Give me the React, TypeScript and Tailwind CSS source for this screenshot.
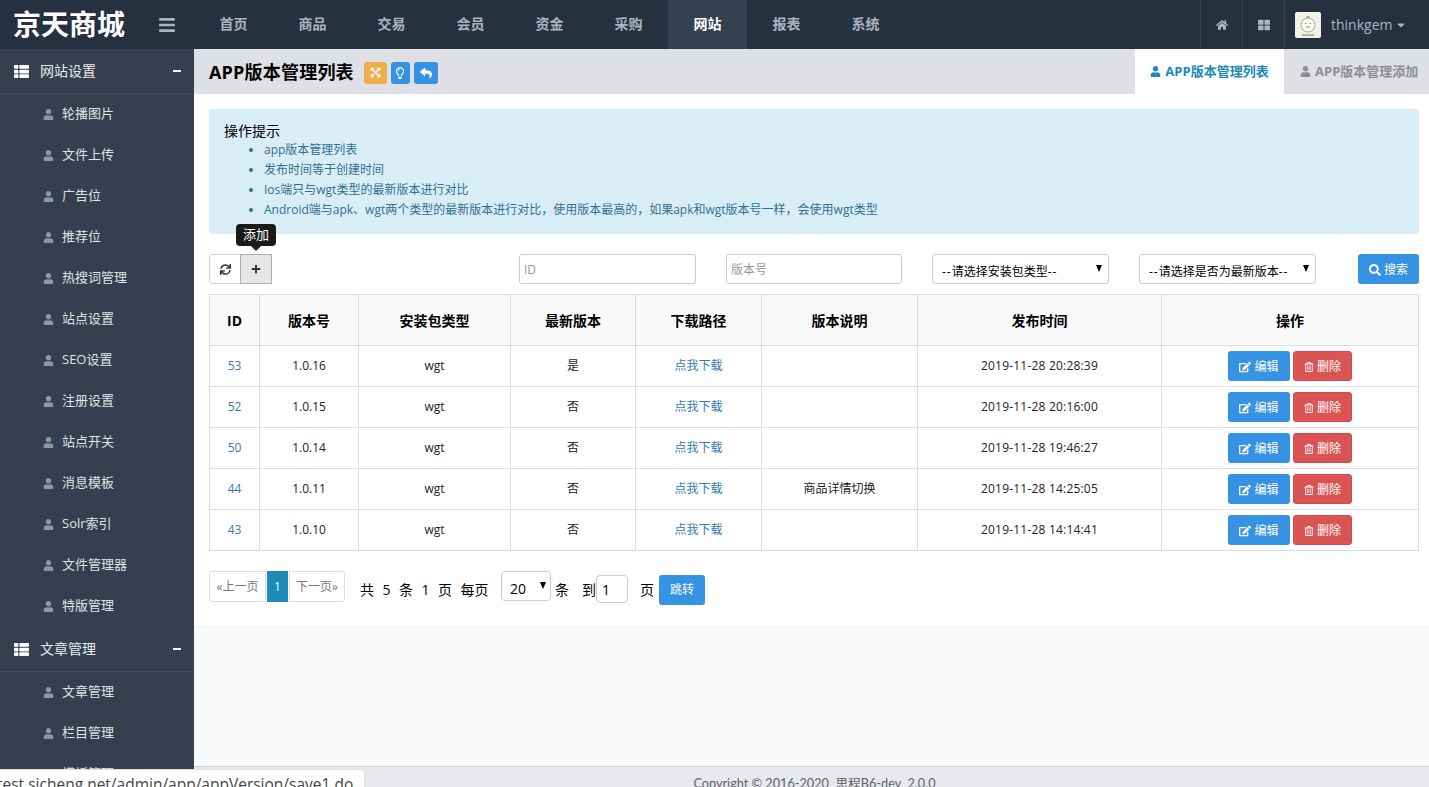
import { FaBars, FaCaretDown, FaEdit, FaExpandArrowsAlt, FaHome, FaPlus, FaRegLightbulb, FaRegTrashAlt, FaReply, FaSearch, FaSync, FaThLarge, FaThList, FaUser } from "react-icons/fa";

const font = "[font-family:'Open_Sans','Noto_Sans_CJK_SC',sans-serif]";

const navItems = ["首页", "商品", "交易", "会员", "资金", "采购", "网站", "报表", "系统"];
const siteMenu = ["轮播图片", "文件上传", "广告位", "推荐位", "热搜词管理", "站点设置", "SEO设置", "注册设置", "站点开关", "消息模板", "Solr索引", "文件管理器", "特版管理"];
const articleMenu = ["文章管理", "栏目管理", "模板管理"];
const tips = [
  "app版本管理列表",
  "发布时间等于创建时间",
  "Ios端只与wgt类型的最新版本进行对比",
  "Android端与apk、wgt两个类型的最新版本进行对比，使用版本最高的，如果apk和wgt版本号一样，会使用wgt类型",
];
const rows = [
  { id: 53, version: "1.0.16", latest: "是", note: "", time: "2019-11-28 20:28:39" },
  { id: 52, version: "1.0.15", latest: "否", note: "", time: "2019-11-28 20:16:00" },
  { id: 50, version: "1.0.14", latest: "否", note: "", time: "2019-11-28 19:46:27" },
  { id: 44, version: "1.0.11", latest: "否", note: "商品详情切换", time: "2019-11-28 14:25:05" },
  { id: 43, version: "1.0.10", latest: "否", note: "", time: "2019-11-28 14:14:41" },
];

function MenuGroup({ title, items }: { title: string; items: string[] }) {
  return (
    <div>
      <div className="flex h-[45px] items-center border-b border-[#3f4b5c] pl-[13px] pr-[13px] text-[14px] text-[#e8eaed]">
        <FaThList className="h-[15px] w-[17px] text-white" />
        <span className="mb-[2px] ml-[10px] flex-1">{title}</span>
        <span className="h-[2px] w-[8px] bg-white" />
      </div>
      {items.map((item) => (
        <div key={item} className="flex h-[41px] items-center pl-[43px] text-[13px] text-[#dfe2e6]">
          <FaUser className="h-[11px] w-[11px] text-[#8f97a3]" />
          <span className="mb-[1px] ml-[8px]">{item}</span>
        </div>
      ))}
    </div>
  );
}

function Avatar() {
  return (
    <svg viewBox="0 0 26 26" className="h-[26px] w-[26px] rounded-[2px] bg-[#f1f2ea]">
      <path d="M13 4v3M11 4.5l2 1 2-1" fill="none" stroke="#8aa56a" strokeWidth="1" />
      <circle cx="13" cy="13" r="7" fill="#fbfbf6" stroke="#8f9481" strokeWidth="0.8" />
      <path d="M10 11.5h1.5M14.5 11.5H16M11 15h4" stroke="#6c6f60" strokeWidth="0.8" />
      <path d="M7 23h12" stroke="#7d7a55" strokeWidth="1.2" />
    </svg>
  );
}

function Arrow() {
  return <span className="block h-0 w-0 border-x-[3.5px] border-t-[7px] border-x-transparent border-t-black" />;
}

function FakeSelect({ label }: { label: string }) {
  return (
    <div className="ml-[30px] flex h-[30px] w-[177px] items-start justify-between rounded-[3px] border border-[#ccc] pl-[9px] pr-[6px] text-black">
      <span className="pt-[8px]">
        <span className="tracking-[1px]">--</span>{label}<span className="tracking-[1px]">--</span>
      </span>
      <span className="pt-[10px]"><Arrow /></span>
    </div>
  );
}

export default function App() {
  return (
    <div className={`relative flex h-[787px] w-[1429px] flex-col overflow-hidden bg-[#f8f9fb] ${font}`}>
      <header className="flex h-[49px] shrink-0 items-center bg-[#263140]">
        <div className="flex w-[194px] items-center">
          <span className="mb-[2px] ml-[13px] text-[28px] font-bold leading-none text-white">京天商城</span>
          <FaBars className="ml-[33px] h-[18px] w-[18px] text-[#aab5c2]" />
        </div>
        <nav className="flex h-full flex-1">
          {navItems.map((item) => (
            <div
              key={item}
              className={`flex h-full w-[79px] items-center justify-center pb-[2px] text-[14px] font-bold ${item === "网站" ? "bg-[#354050] text-white" : "text-[#aab4c0]"}`}
            >
              {item}
            </div>
          ))}
        </nav>
        <div className="flex h-full text-[#aab5c2]">
          <div className="flex w-[42px] items-center justify-center border-l border-[#364150]">
            <FaHome className="h-[12px] w-[12px]" />
          </div>
          <div className="flex w-[42px] items-center justify-center border-l border-[#364150]">
            <FaThLarge className="h-[12px] w-[12px]" />
          </div>
          <div className="flex w-[145px] items-center border-l border-[#364150] pl-[10px]">
            <Avatar />
            <span className="ml-[10px] text-[14px]">thinkgem</span>
            <FaCaretDown className="ml-[4px] h-[12px] w-[10px]" />
          </div>
        </div>
      </header>

      <div className="flex min-h-0 flex-1">
        <aside className="w-[194px] shrink-0 overflow-hidden bg-[#353f4f]">
          <MenuGroup title="网站设置" items={siteMenu} />
          <MenuGroup title="文章管理" items={articleMenu} />
        </aside>

        <main className="flex min-w-0 flex-1 flex-col">
          <div className="flex h-[45px] shrink-0 items-center bg-[#dfe0e5]">
            <h1 className="ml-[15px] mt-[2px] text-[18px] font-bold tracking-[0.2px] text-black">APP版本管理列表</h1>
            <div className="ml-[10px] mt-[2px] flex items-center gap-[4px] text-white">
              <span className="flex h-[22px] w-[23px] items-center justify-center rounded-[3px] bg-[#f0ad4e]"><FaExpandArrowsAlt className="h-[11px] w-[11px]" /></span>
              <span className="flex h-[22px] w-[19px] items-center justify-center rounded-[3px] bg-[#3692e3]"><FaRegLightbulb className="h-[12px] w-[12px]" /></span>
              <span className="flex h-[22px] w-[24px] items-center justify-center rounded-[3px] bg-[#3692e3]"><FaReply className="h-[12px] w-[12px]" /></span>
            </div>
            <div className="ml-auto flex h-full text-[13px] font-bold">
              <div className="flex w-[149px] items-center justify-center bg-white text-[#1c8abb]">
                <FaUser className="mr-[4px] h-[11px] w-[11px]" />APP版本管理列表
              </div>
              <div className="flex w-[145px] items-center pl-[16px] text-[#8e8e90]">
                <FaUser className="mr-[4px] h-[11px] w-[11px] shrink-0" /><span className="whitespace-nowrap">APP版本管理添加</span>
              </div>
            </div>
          </div>

          <section className="relative h-[533px] shrink-0 border-b border-[#eff0f2] bg-white pl-[15px] pr-[10px] pt-[15px]">
            <div className="h-[125px] rounded-[4px] bg-[#d9edf6] px-[15px] pt-[13px]">
              <div className="text-[14px] leading-[18px] text-black">操作提示</div>
              <ul className="ml-[40px] list-disc text-[12px] leading-[20px] text-[#31708f]">
                {tips.map((tip) => (
                  <li key={tip}>{tip}</li>
                ))}
              </ul>
            </div>

            <div className="mt-[20px] flex h-[30px] items-center text-[12px]">
              <div className="flex">
                <button className="flex h-[30px] w-[32px] items-center justify-center rounded-l-[3px] border border-[#d2d2d2] bg-white text-[#333]"><FaSync className="h-[11px] w-[11px]" /></button>
                <button className="-ml-px flex h-[30px] w-[32px] items-center justify-center border border-[#adadad] bg-[#e6e6e6] text-[#333]"><FaPlus className="h-[10px] w-[10px]" /></button>
              </div>
              <input placeholder="ID" className="ml-[247px] h-[30px] w-[177px] rounded-[3px] border border-[#ccc] px-[4px] placeholder:text-[#999]" />
              <input placeholder="版本号" className="ml-[30px] h-[30px] w-[176px] rounded-[3px] border border-[#ccc] px-[4px] placeholder:text-[#999]" />
              <FakeSelect label="请选择安装包类型" />
              <FakeSelect label="请选择是否为最新版本" />
              <button className="ml-[42px] flex h-[30px] w-[61px] items-center justify-center rounded-[3px] bg-[#3692e3] pt-[1px] text-white">
                <FaSearch className="mr-[3px] h-[12px] w-[12px]" />搜索
              </button>
            </div>

            <table className="mt-[10px] w-[1209px] table-fixed border-collapse text-center text-[12px] text-[#222]">
              <colgroup>
                <col className="w-[50px]" />
                <col className="w-[99px]" />
                <col className="w-[152px]" />
                <col className="w-[125px]" />
                <col className="w-[126px]" />
                <col className="w-[156px]" />
                <col className="w-[244px]" />
                <col className="w-[257px]" />
              </colgroup>
              <thead>
                <tr className="h-[51px] bg-[#f9f9f9] text-[14px] font-bold text-black">
                  {["ID", "版本号", "安装包类型", "最新版本", "下载路径", "版本说明", "发布时间", "操作"].map((title) => (
                    <th key={title} className="border border-[#ddd]">{title}</th>
                  ))}
                </tr>
              </thead>
              <tbody>
                {rows.map((row) => (
                  <tr key={row.id} className="h-[41px]">
                    <td className="border border-[#ddd] text-[#337ab7]">{row.id}</td>
                    <td className="border border-[#ddd]">{row.version}</td>
                    <td className="border border-[#ddd]">wgt</td>
                    <td className="border border-[#ddd]">{row.latest}</td>
                    <td className="border border-[#ddd] text-[#337ab7]">点我下载</td>
                    <td className="border border-[#ddd]">{row.note}</td>
                    <td className="border border-[#ddd] tracking-[0.2px]">{row.time}</td>
                    <td className="border border-[#ddd]">
                      <div className="flex justify-center gap-[3px] text-white">
                        <button className="flex h-[30px] w-[62px] items-center justify-center rounded-[3px] bg-[#3692e3] pt-[1px]">
                          <FaEdit className="mr-[3px] h-[12px] w-[12px]" />编辑
                        </button>
                        <button className="flex h-[30px] w-[59px] items-center justify-center rounded-[3px] border border-[#d44a4a] bg-[#db5454] pt-[1px]">
                          <FaRegTrashAlt className="mr-[3px] h-[10px] w-[10px]" />删除
                        </button>
                      </div>
                    </td>
                  </tr>
                ))}
              </tbody>
            </table>

            <div className="mt-[20px] flex h-[36px] items-start text-[14px] text-black">
              <div className="flex h-[31px] items-center text-[12px]">
                <span className="flex h-full w-[57px] items-center justify-center rounded-l-[3px] border border-[#ddd] text-[#777]">«上一页</span>
                <span className="ml-px flex h-full w-[21px] items-center justify-center bg-[#1c8abb] text-white">1</span>
                <span className="ml-px flex h-full w-[56px] items-center justify-center rounded-r-[3px] border border-[#ddd] text-[#777]">下一页»</span>
              </div>
              <div className="ml-[15px] flex h-[36px] items-center">
                <div className="flex gap-[8.5px]">
                  <span>共</span><span>5</span><span>条</span><span>1</span><span>页</span><span>每页</span>
                </div>
                <div className="-mt-[6px] ml-[12.5px] flex h-[30px] w-[50px] items-start justify-between rounded-[4px] border border-[#ccc] pl-[8px] pr-[4px]">
                  <span className="pt-[6px]">20</span>
                  <span className="pt-[10px]"><Arrow /></span>
                </div>
                <span className="ml-[4px]">条</span>
                <span className="ml-[13px]">到</span>
                <div className="flex h-[28px] w-[32px] items-center rounded-[4px] border border-[#ccc] pl-[5px]">1</div>
                <span className="ml-[12px]">页</span>
                <button className="ml-[5px] mt-[2px] h-[30px] w-[46px] rounded-[3px] bg-[#3692e3] text-[12px] text-white">跳转</button>
              </div>
            </div>

            <div className="absolute left-[42px] top-[130px] flex h-[22px] w-[40px] items-center justify-center rounded-[4px] bg-[#1a1a1a] text-[13px] text-white">
              添加
              <span className="absolute left-[15px] top-[22px] h-0 w-0 border-x-[5px] border-t-[5px] border-x-transparent border-t-[#1a1a1a]" />
            </div>
          </section>

          <div className="flex-1" />
          <footer className="h-[21px] shrink-0 border-t border-[#cfd0d2] bg-[#e8e9ec] pl-[6px] pt-[7px] text-center text-[12.7px] leading-[18px] whitespace-pre text-[#5f6368] [font-family:'Lato','Noto_Sans_CJK_SC',sans-serif]">
            Copyright © 2016-2020  思程B6-dev  2.0.0
          </footer>
        </main>
      </div>

      <div className="absolute bottom-0 left-0 h-[18px] w-[365px] overflow-hidden rounded-tr-[4px] border-r border-t border-[#dfe0e2] bg-white text-[15.5px] leading-[20px] whitespace-nowrap text-[#444]">
        <span className="absolute -left-[3px] top-[4px]">test.sicheng.net/admin/app/appVersion/save1.do</span>
      </div>
    </div>
  );
}
